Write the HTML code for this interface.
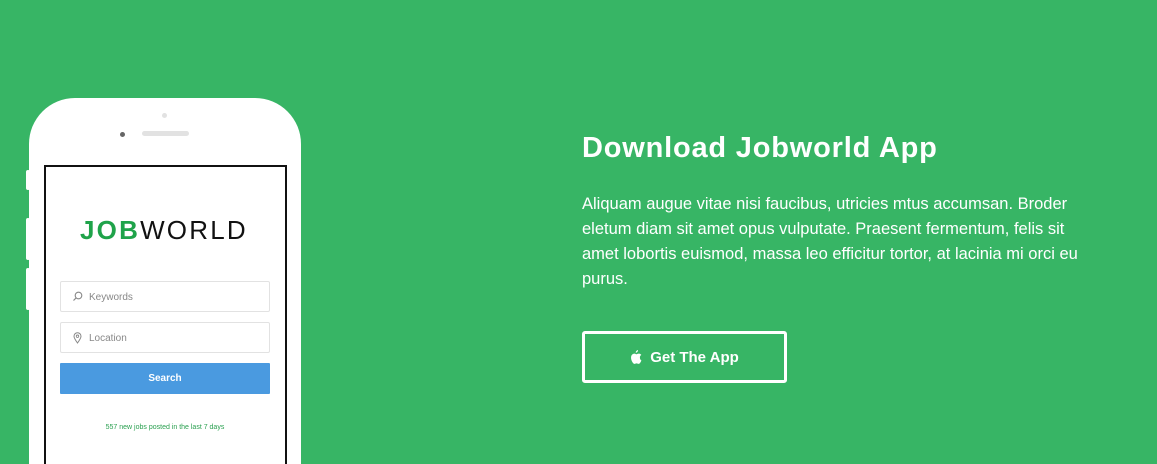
<!DOCTYPE html>
<html><head><meta charset="utf-8"><style>
*{margin:0;padding:0;box-sizing:border-box}
html{width:1157px;height:464px;overflow:hidden}
body{width:1157px;height:464px;overflow:hidden;background:#37b565;font-family:"Liberation Sans",sans-serif;position:relative}
.phone{position:absolute;left:29px;top:98px;width:272px;height:366px;background:#fff;border-radius:46px 46px 0 0}
.btn{position:absolute;left:26px;width:4px;background:#fff;border-radius:2px}
.screen{position:absolute;left:44px;top:165px;width:243px;height:299px;border:2px solid #111;border-bottom:none;background:#fff}
.cam{position:absolute;left:120px;top:132px;width:5px;height:5px;border-radius:50%;background:#666}
.spk{position:absolute;left:142px;top:131px;width:47px;height:5px;border-radius:3px;background:#e2e2e2}
.sens{position:absolute;left:162px;top:113px;width:5px;height:5px;border-radius:50%;background:#e2e2e2}
.logo{position:absolute;left:80px;top:215px;font-size:26px;letter-spacing:2.2px;color:#111}
.logo b{color:#1fa34a;font-weight:900}
.inp{position:absolute;left:60px;width:210px;height:31px;border:1px solid #e2e2e2;border-radius:2px;font-size:10px;color:#888;padding:10px 0 0 28px}
.sb{position:absolute;left:60px;top:363px;width:210px;height:31px;background:#4a9ae0;color:#fff;font-size:10px;font-weight:bold;text-align:center;line-height:31px;border-radius:1px}
.note{position:absolute;left:60px;top:424px;width:210px;text-align:center;font-size:7px;color:#2aa050}
h1{position:absolute;left:582px;top:132px;font-size:29px;color:#fff;font-weight:bold;letter-spacing:0.8px}
p{position:absolute;left:582px;top:192px;width:560px;font-size:16.5px;line-height:25px;color:#fff;letter-spacing:0}
.get{position:absolute;left:582px;top:331px;width:205px;height:52px;border:3px solid #fff;border-radius:3px;color:#fff;font-weight:bold;font-size:15px;display:flex;align-items:center;justify-content:center;gap:8px}
</style></head><body>
<div class="btn" style="top:170px;height:20px"></div>
<div class="btn" style="top:218px;height:42px"></div>
<div class="btn" style="top:268px;height:42px"></div>
<div class="phone"></div>
<div class="sens"></div><div class="cam"></div><div class="spk"></div>
<div class="screen"></div>
<div class="logo"><b>JOB</b>WORLD</div>
<div class="inp" style="top:281px">Keywords</div>
<svg style="position:absolute;left:72px;top:291px" width="11" height="11" viewBox="0 0 11 11"><circle cx="6.5" cy="4.5" r="3.3" fill="none" stroke="#888" stroke-width="1.1"/><path d="M4 7L1.5 9.5" stroke="#888" stroke-width="1.2"/></svg>
<div class="inp" style="top:322px">Location</div>
<svg style="position:absolute;left:73px;top:332px" width="9" height="12" viewBox="0 0 9 12"><path d="M4.5 11C2 7.5 1 6 1 4.2A3.5 3.5 0 0 1 8 4.2C8 6 7 7.5 4.5 11Z" fill="none" stroke="#888" stroke-width="1"/><circle cx="4.5" cy="4.2" r="1.2" fill="none" stroke="#888" stroke-width="0.9"/></svg>
<div class="sb">Search</div>
<div class="note">557 new jobs posted in the last 7 days</div>
<h1>Download Jobworld App</h1>
<p>Aliquam augue vitae nisi faucibus, utricies mtus accumsan. Broder<br>eletum diam sit amet opus vulputate. Praesent fermentum, felis sit<br>amet lobortis euismod, massa leo efficitur tortor, at lacinia mi orci eu<br>purus.</p>
<div class="get"><svg width="12" height="14" viewBox="0 0 12 14"><path d="M8 0C8.2 1.3 7 2.8 5.8 2.8 5.6 1.6 6.8 0.2 8 0Z M9.9 7.5C9.9 5.8 11.2 5 11.3 4.9 10.5 3.7 9.3 3.6 8.9 3.6 7.9 3.5 7 4.2 6.5 4.2 6 4.2 5.2 3.6 4.4 3.6 3.2 3.6 2.2 4.3 1.6 5.3 0.4 7.4 1.3 10.5 2.5 12.2 3 13 3.7 13.9 4.5 13.9 5.3 13.8 5.6 13.4 6.5 13.4 7.5 13.4 7.7 13.9 8.6 13.9 9.4 13.8 10 13 10.5 12.2 11.1 11.4 11.4 10.5 11.4 10.4 11.3 10.4 9.9 9.8 9.9 7.5Z" fill="#fff"/></svg>Get The App</div>
</body></html>
